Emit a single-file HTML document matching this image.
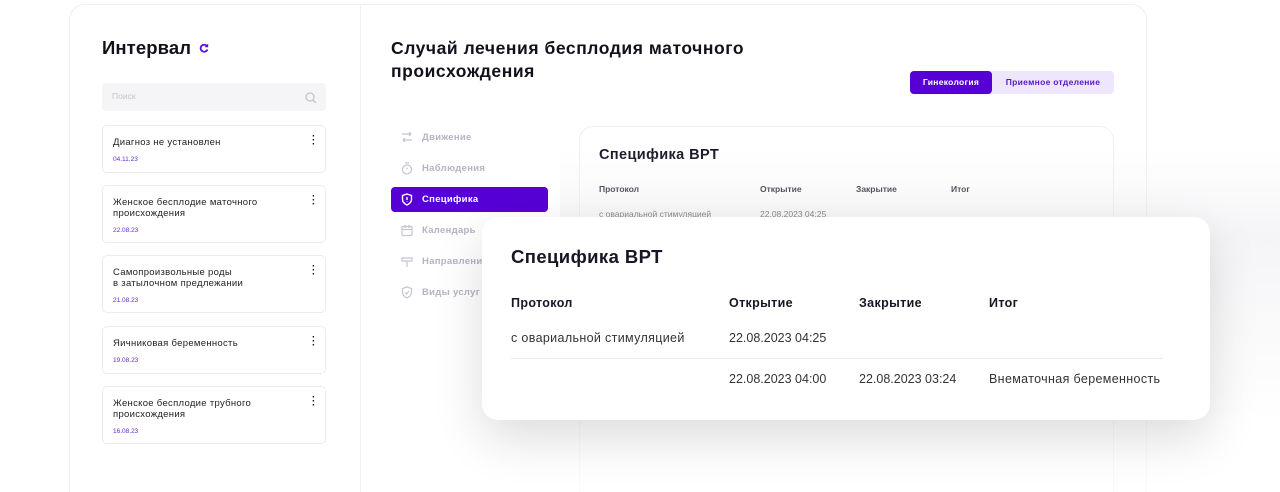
<!DOCTYPE html>
<html><head><meta charset="utf-8"><style>
*{box-sizing:border-box;margin:0;padding:0}
html,body{width:1280px;height:492px;overflow:hidden}
body{background:#fff;font-family:"Liberation Sans","DejaVu Sans",sans-serif;color:#161625;position:relative}
.abs{position:absolute}
.outer{left:69px;top:4px;width:1078px;height:488px;border:1px solid #efeff3;border-bottom:none;border-radius:16px 16px 0 0;background:#fff}
.vline{left:360px;top:5px;width:1px;height:487px;background:#f0f0f3}
.card{left:102px;width:224px;border:1px solid #ececf0;border-radius:5px;background:#fff}
.card .t{position:absolute;left:10px;top:11px;font-size:9.5px;line-height:11px;color:#222;letter-spacing:0.3px}
.card .d{position:absolute;left:10px;font-size:6.5px;color:#6a2bd8}
.card .m{position:absolute;right:10px;top:9px;font-size:10px;font-weight:bold;line-height:4px;width:3px;text-align:center}
.nav{left:391px;width:157px;height:25px;font-size:9.5px;color:#b4b4c4;font-weight:bold;letter-spacing:0.3px}
.nav svg{position:absolute;left:10px;top:6px}
.nav span{position:absolute;left:31px;top:7px}
.p{letter-spacing:0.35px}
</style></head><body>
<div class="abs outer"></div>
<div class="abs vline"></div>
<div class="abs" style="left:102px;top:37px;font-size:18.5px;font-weight:bold;color:#11111c;letter-spacing:0.1px">Интервал</div>
<svg class="abs" style="left:199px;top:43px" width="10" height="10" viewBox="0 0 10 10"><path d="M8 3.2A3.5 3.5 0 1 0 8.4 6.5" stroke="#5a12d6" stroke-width="1.8" fill="none"/><path d="M9.2 0.6V4.2H5.6Z" fill="#5a12d6"/></svg>
<div class="abs" style="left:102px;top:83px;width:224px;height:28px;background:#f5f5f7;border-radius:4px"></div>
<div class="abs" style="left:112px;top:91px;font-size:8.5px;color:#c3c3cc">Поиск</div>
<svg class="abs" style="left:305px;top:92px" width="12" height="12" viewBox="0 0 12 12"><circle cx="5" cy="5" r="4" stroke="#c3c3cc" stroke-width="1.3" fill="none"/><path d="M8 8l3 3" stroke="#c3c3cc" stroke-width="1.3"/></svg>

<div class="abs card" style="top:125px;height:48px"><div class="t">Диагноз не установлен</div><div class="d" style="top:30px">04.11.23</div><div class="m">·<br>·<br>·</div></div>
<div class="abs card" style="top:185px;height:58px"><div class="t">Женское бесплодие маточного<br>происхождения</div><div class="d" style="top:41px">22.08.23</div><div class="m">·<br>·<br>·</div></div>
<div class="abs card" style="top:255px;height:58px"><div class="t">Самопроизвольные роды<br>в затылочном предлежании</div><div class="d" style="top:41px">21.08.23</div><div class="m">·<br>·<br>·</div></div>
<div class="abs card" style="top:326px;height:48px"><div class="t">Яичниковая беременность</div><div class="d" style="top:30px">19.08.23</div><div class="m">·<br>·<br>·</div></div>
<div class="abs card" style="top:386px;height:58px"><div class="t">Женское бесплодие трубного<br>происхождения</div><div class="d" style="top:41px">16.08.23</div><div class="m">·<br>·<br>·</div></div>

<div class="abs" style="left:391px;top:37px;font-size:17.5px;line-height:23px;font-weight:bold;color:#11111c;letter-spacing:0.55px">Случай лечения бесплодия маточного<br>происхождения</div>
<div class="abs" style="left:910px;top:71px;width:204px;height:23px;background:#ede6fc;border-radius:4px"></div>
<div class="abs" style="left:910px;top:71px;width:82px;height:23px;background:#5600d6;border-radius:4px;color:#fff;font-size:8.5px;font-weight:bold;text-align:center;line-height:23px;letter-spacing:0.3px">Гинекология</div>
<div class="abs" style="left:992px;top:71px;width:122px;height:23px;color:#5a16c9;font-size:8.5px;font-weight:bold;text-align:center;line-height:23px;letter-spacing:0.3px">Приемное отделение</div>

<div class="abs" style="left:579px;top:126px;width:535px;height:366px;border:1px solid #efeff3;border-bottom:none;border-radius:14px 14px 0 0;background:#fff"></div>
<div class="abs" style="left:599px;top:147px;font-size:14.5px;font-weight:bold;color:#161625;letter-spacing:0.4px">Специфика ВРТ</div>
<div class="abs" style="left:599px;top:184px;font-size:8.5px;font-weight:bold">Протокол</div>
<div class="abs" style="left:760px;top:184px;font-size:8.5px;font-weight:bold">Открытие</div>
<div class="abs" style="left:856px;top:184px;font-size:8.5px;font-weight:bold">Закрытие</div>
<div class="abs" style="left:951px;top:184px;font-size:8.5px;font-weight:bold">Итог</div>
<div class="abs" style="left:599px;top:209px;font-size:8.5px;color:#333">с овариальной стимуляцией</div>
<div class="abs" style="left:760px;top:209px;font-size:8.5px;color:#333">22.08.2023 04:25</div>

<div class="abs" style="left:560px;top:150px;width:720px;height:342px;background:linear-gradient(180deg,rgba(240,240,244,0) 0%,rgba(238,238,242,0.6) 25%,rgba(255,255,255,0.6) 80%)"></div>

<div class="abs nav" style="top:125px"><svg width="12" height="13" viewBox="0 0 12 13" fill="none" stroke="#c4c4d2" stroke-width="1.2"><path d="M1 3h9M8 1l2 2-2 2M11 9H2M4 7L2 9l2 2"/></svg><span>Движение</span></div>
<div class="abs nav" style="top:156px"><svg width="12" height="13" viewBox="0 0 12 13" fill="none" stroke="#c4c4d2" stroke-width="1.2"><circle cx="6" cy="7.5" r="4.5"/><path d="M4 1h4M6 5.5v2"/></svg><span>Наблюдения</span></div>
<div class="abs nav" style="top:187px;background:#5600d6;border-radius:4px;color:#fff"><svg width="12" height="13" viewBox="0 0 12 13" fill="none" stroke="#fff" stroke-width="1.4"><path d="M6 1l4.5 1.5v4C10.5 9.5 8 11 6 12 4 11 1.5 9.5 1.5 6.5v-4z"/><path d="M6 4v3M6 8.5v.5"/></svg><span>Специфика</span></div>
<div class="abs nav" style="top:218px"><svg width="12" height="13" viewBox="0 0 12 13" fill="none" stroke="#c4c4d2" stroke-width="1.2"><rect x="1" y="2.5" width="10" height="9" rx="1"/><path d="M1 5.5h10M4 1v3M8 1v3"/></svg><span>Календарь</span></div>
<div class="abs nav" style="top:249px"><svg width="12" height="13" viewBox="0 0 12 13" fill="none" stroke="#c4c4d2" stroke-width="1.2"><path d="M1 3h10v3H1zM6 6v6"/></svg><span>Направления</span></div>
<div class="abs nav" style="top:280px"><svg width="12" height="13" viewBox="0 0 12 13" fill="none" stroke="#c4c4d2" stroke-width="1.2"><path d="M6 1l4.5 1.5v4C10.5 9.5 8 11 6 12 4 11 1.5 9.5 1.5 6.5v-4z"/><path d="M4 6.5l1.5 1.5L8 5"/></svg><span>Виды услуг</span></div>

<div class="abs" style="left:482px;top:217px;width:728px;height:203px;background:#fff;border-radius:16px;box-shadow:0 18px 50px rgba(0,0,0,0.14)"></div>
<div class="abs" style="left:511px;top:246px;font-size:18.5px;font-weight:bold;color:#161625;letter-spacing:0.4px">Специфика ВРТ</div>
<div class="abs p" style="left:511px;top:296px;font-size:12.5px;font-weight:bold">Протокол</div>
<div class="abs p" style="left:729px;top:296px;font-size:12.5px;font-weight:bold">Открытие</div>
<div class="abs p" style="left:859px;top:296px;font-size:12.5px;font-weight:bold">Закрытие</div>
<div class="abs p" style="left:989px;top:296px;font-size:12.5px;font-weight:bold">Итог</div>
<div class="abs p" style="left:511px;top:331px;font-size:12.5px;color:#333">с овариальной стимуляцией</div>
<div class="abs" style="left:729px;top:331px;font-size:12.5px;color:#333">22.08.2023 04:25</div>
<div class="abs" style="left:511px;top:358px;width:652px;height:1px;background:#ececf0"></div>
<div class="abs" style="left:729px;top:372px;font-size:12.5px;color:#333">22.08.2023 04:00</div>
<div class="abs" style="left:859px;top:372px;font-size:12.5px;color:#333">22.08.2023 03:24</div>
<div class="abs p" style="left:989px;top:372px;font-size:12.5px;color:#333">Внематочная беременность</div>
</body></html>
